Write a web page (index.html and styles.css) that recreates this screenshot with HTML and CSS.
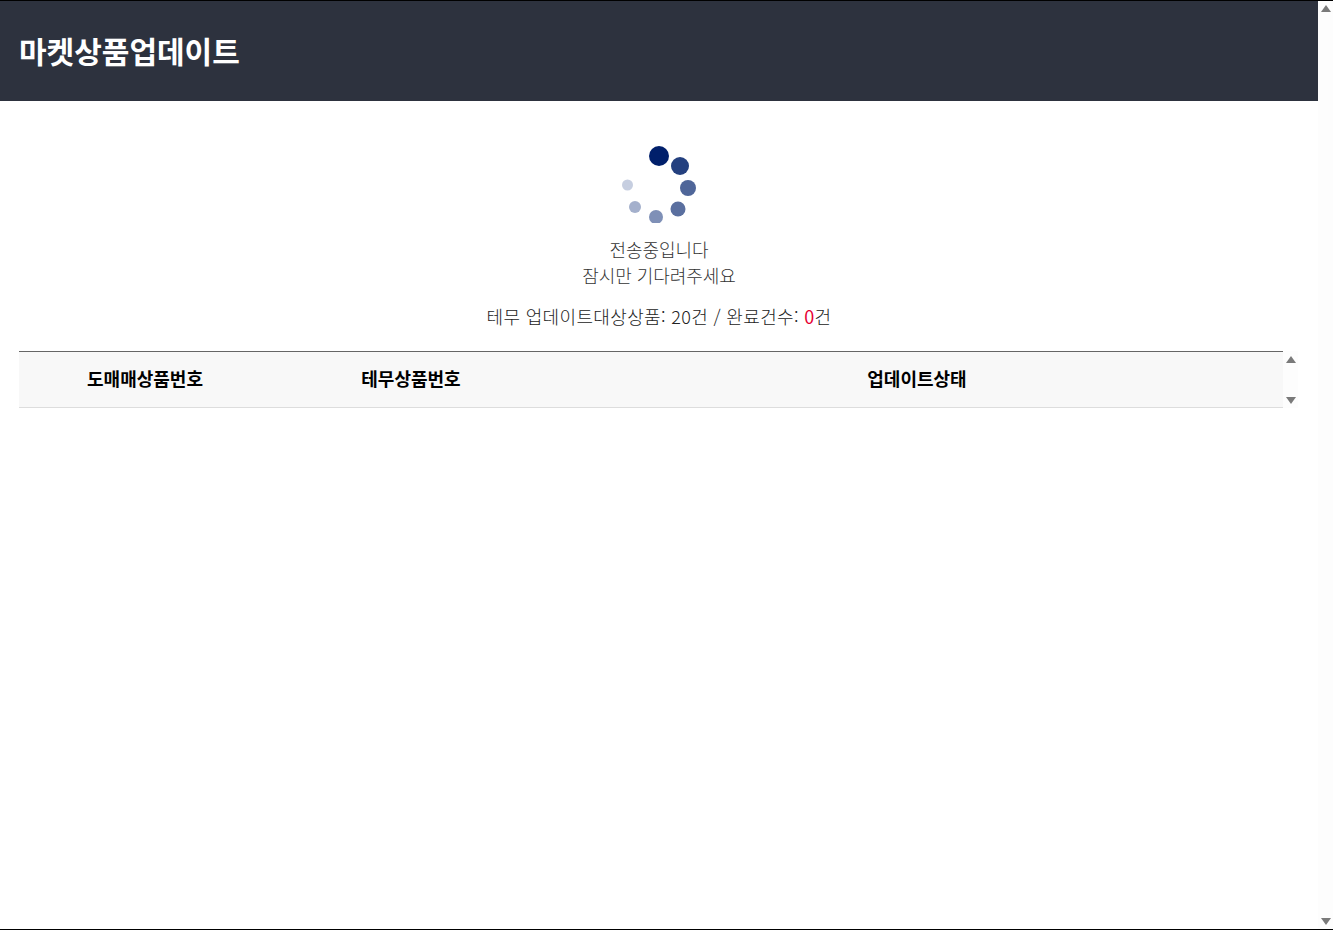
FILE: index.html
```html
<!DOCTYPE html>
<html lang="ko">
<head>
  <meta charset="UTF-8" />
  <title>마켓상품업데이트</title>
  <link rel="stylesheet" href="styles.css">
</head>
<body>
  <div class="page">
    <header class="topbar"><h1>마켓상품업데이트</h1></header>
    <main class="content">
      <svg class="spinner" width="80" height="78" viewBox="0 0 80 78">
        <circle cx="40" cy="11" r="10" fill="#001f6b"/>
        <circle cx="61" cy="21" r="9" fill="#24407f" />
        <circle cx="69" cy="43" r="8" fill="#4f6699"/>
        <circle cx="59" cy="64" r="7.5" fill="#5a6f9f"/>
        <circle cx="37" cy="72" r="7" fill="#7f90b7"/>
        <circle cx="16" cy="62" r="6" fill="#a4b0cc"/>
        <circle cx="8.500" cy="40" r="5.500" fill="#c6cee0"/>
      </svg>
      <p class="wait">전송중입니다<br>잠시만 기다려주세요</p>
      <p class="count">테무 업데이트대상상품: 20건 / 완료건수: <span class="zero">0</span>건</p>
      <div class="table-wrap">
        <div class="table-head">
          <div>도매매상품번호</div>
          <div>테무상품번호</div>
          <div>업데이트상태</div>
        </div>
        <div class="scrollbar inner">
          <span class="arrow up"></span>
          <span class="arrow down"></span>
        </div>
      </div>
    </main>
  </div>
  <div class="scrollbar outer">
    <span class="arrow up"></span>
    <span class="arrow down"></span>
  </div>
</body>
</html>
```

FILE: styles.css
```css
*{box-sizing:border-box}
html,body{height:100%}
body{margin:0;display:flex;height:930px;overflow:hidden;background:#fff;border-top:1px solid #000;border-bottom:1px solid #000;font-family:"Noto Sans CJK KR","Liberation Sans",sans-serif;color:#555}
.page{flex:1;min-width:0}
.topbar{height:100px;padding:0 19px 2px;display:flex;align-items:center;background:#2d323e}
.topbar h1{margin:0;font-size:30px;font-weight:700;letter-spacing:0;color:#fff}
.content{display:flex;flex-direction:column;align-items:center;padding-top:44px}
.spinner{display:block;margin-bottom:13px;flex:none}
.wait{margin:0;font-size:18px;line-height:26px;text-align:center;letter-spacing:-.05px;font-weight:300;color:#333}
.count{margin:15px 0 0;height:26px;font-size:18px;line-height:26px;letter-spacing:.35px;color:#222;font-weight:300}
.zero{color:#e60033;font-weight:400}
.table-wrap{align-self:stretch;display:flex;margin:22px 20px 0 19px}
.table-head{flex:1;height:57px;padding-bottom:4px;display:grid;grid-template-columns:252px 280px 1fr;align-items:center;text-align:center;background:#f8f8f8;border-top:1px solid #666;border-bottom:1px solid #ddd;font-size:18px;font-weight:700;color:#000}
.scrollbar{width:15px;display:flex;flex-direction:column;justify-content:space-between;align-items:center;background:#fdfdfd}
.scrollbar.inner{padding:5px 0 4px}
.scrollbar.outer{height:100%;padding:4px 0}
.arrow{width:0;height:0;border-left:5.500px solid transparent;border-right:5.500px solid transparent}
.arrow.up{border-bottom:7px solid #7a7a7a}
.arrow.down{border-top:7px solid #7a7a7a}
```
